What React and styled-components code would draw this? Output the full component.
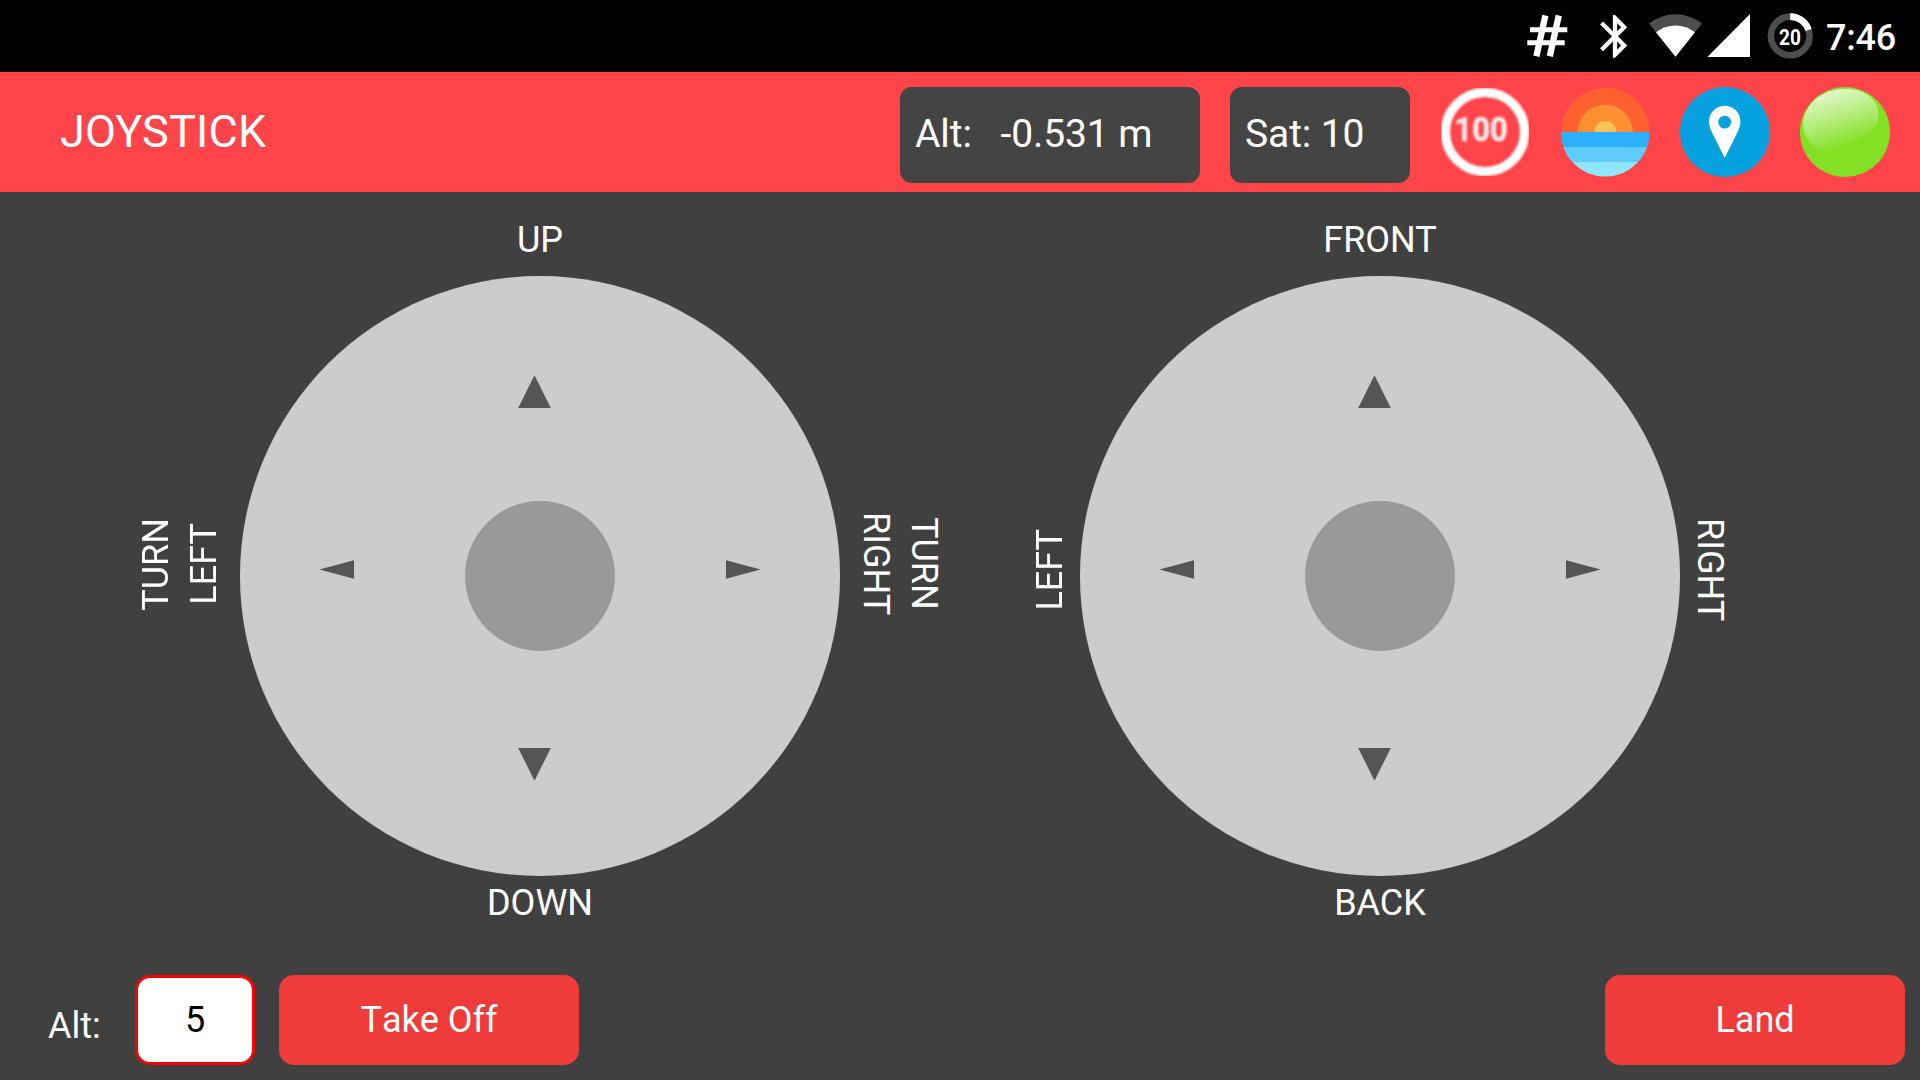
import React from "react";
import styled, { createGlobalStyle } from "styled-components";

const GlobalStyle = createGlobalStyle`
  * { box-sizing: border-box; }
  body {
    margin: 0;
    background: #404040;
    color: #fff;
    font-family: Roboto, "Noto Sans", sans-serif;
    font-size: 36px;
  }
`;

const Screen = styled.div`
  display: flex;
  flex-direction: column;
  width: 1920px;
  height: 1080px;
  overflow: hidden;
  background: #404040;
`;

const StatusBar = styled.div`
  display: flex;
  align-items: center;
  justify-content: flex-end;
  height: 72px;
  padding-right: 23px;
  background: #000;
`;

const StatusIcon = styled.svg`
  flex: none;
  display: block;
  width: ${(p) => p.$w}px;
  height: 72px;
  margin-right: ${(p) => p.$gap || 0}px;
`;

const Clock = styled.span`
  width: 71px;
  font-size: 36px;
  font-weight: 500;
  line-height: 72px;
  letter-spacing: -0.2px;
  padding-top: 4px;
`;

const Header = styled.header`
  display: flex;
  align-items: flex-start;
  gap: 30px;
  height: 120px;
  padding: 15px 30px 15px 60px;
  background: #ff444a;
`;

const Title = styled.h1`
  flex: 1;
  margin: 0;
  font-size: 45px;
  font-weight: 400;
  line-height: 90px;
  letter-spacing: 0.2px;
`;

const Readout = styled.div`
  width: ${(p) => p.$width}px;
  height: 96px;
  padding: 0 15px;
  border-radius: 12px;
  background: #444;
  font-size: 39px;
  line-height: 95px;
  letter-spacing: -0.1px;
  white-space: pre;
`;

const Badge = styled.svg`
  flex: none;
  display: block;
  width: 90px;
  height: 90px;
`;

const Controls = styled.main`
  display: grid;
  grid-template-columns: 240px 600px 240px 600px 240px;
  grid-template-rows: 84px 600px 51px;
  height: 735px;
`;

const TopLabel = styled.div`
  grid-column: ${(p) => p.$column};
  grid-row: 1;
  align-self: end;
  height: 60px;
  line-height: 48px;
  text-align: center;
`;

const BottomLabel = styled.div`
  grid-column: ${(p) => p.$column};
  grid-row: 3;
  padding-top: 3px;
  line-height: 48px;
  text-align: center;
`;

const Gutter = styled.div`
  grid-column: ${(p) => p.$column};
  grid-row: 2;
  display: flex;
  align-items: center;
  justify-content: ${(p) => p.$justify};
  padding: ${(p) => p.$pad};
`;

const SideLabel = styled.div`
  writing-mode: vertical-rl;
  line-height: 48px;
  text-align: center;
  white-space: pre;
  transform: ${(p) => (p.$flip ? "rotate(180deg)" : "none")};
  margin-bottom: ${(p) => p.$lift}px;
`;

const Pad = styled.div`
  grid-column: ${(p) => p.$column};
  grid-row: 2;
  display: flex;
  flex-direction: column;
  align-items: center;
  width: 600px;
  height: 600px;
  padding-top: 99px;
  border-radius: 50%;
  background: #ccc;
`;

const PadRow = styled.div`
  display: flex;
  align-items: center;
  gap: ${(p) => p.$gap || 0}px;
  padding-right: ${(p) => p.$shift || 0}px;
  margin: ${(p) => p.$margin || 0};
`;

const Knob = styled.div`
  width: 150px;
  height: 150px;
  border-radius: 50%;
  background: #999;
`;

const Arrow = styled.svg`
  display: block;
  fill: #555;
  margin-bottom: ${(p) => p.$lift || 0}px;
`;

const BottomBar = styled.footer`
  display: flex;
  align-items: flex-start;
  height: 153px;
  padding: 48px 15px 0 48px;
`;

const FieldLabel = styled.label`
  width: 87px;
  line-height: 90px;
  padding-top: 6px;
`;

const Field = styled.input`
  width: 120px;
  height: 90px;
  padding: 0;
  margin: 0 24px 0 0;
  border: 3px solid #f00;
  border-radius: 15px;
  outline: 0;
  background: #fff;
  color: #000;
  font: 400 36px Roboto, sans-serif;
  text-align: center;
`;

const Button = styled.button`
  width: 300px;
  height: 90px;
  padding: 0;
  margin-left: ${(p) => (p.$end ? "auto" : 0)};
  border: 0;
  border-radius: 15px;
  background: #ef3b39;
  color: #fff;
  font: 400 36px Roboto, sans-serif;
  font-kerning: none;
`;

function StatusIcons() {
  return (
    <>
      <StatusIcon $w={42} $gap={20} viewBox="1526 0 42 72">
        <g stroke="#fff" fill="none">
          <path strokeWidth="6.3" d="M1545.4 15.5L1536.4 56.2M1558.8 15.5L1549.8 56.2" />
          <path strokeWidth="5" d="M1530 29.8H1567.3M1527.3 42.7H1564.7" />
        </g>
      </StatusIcon>
      <StatusIcon $w={51} $gap={10} viewBox="1588 0 51 72">
        <path
          fill="#fff"
          transform="translate(1589.4 10.7) scale(2.135)"
          d="M17.71 7.71L12 2h-1v7.59L6.41 5 5 6.41 10.59 12 5 17.59 6.41 19 11 14.41V22h1l5.71-5.71-4.3-4.29 4.3-4.29zM13 5.83l1.88 1.88L13 9.59V5.83zm1.88 10.46L13 18.17v-3.76l1.88 1.88z"
        />
      </StatusIcon>
      <StatusIcon $w={54} $gap={4} viewBox="1649 0 54 72">
        <path fill="#4d4d4d" d="M1675.5 56.5L1649 23.6A42.3 42.3 0 0 1 1702 23.6Z" />
        <path fill="#fff" d="M1675.5 56.7L1656 32.3A31.2 31.2 0 0 1 1695 32.3Z" />
      </StatusIcon>
      <StatusIcon $w={43} $gap={17} viewBox="1707 0 43 72">
        <path fill="#fff" d="M1707.3 57H1750V14Z" />
      </StatusIcon>
      <StatusIcon $w={46} $gap={13} viewBox="1767 0 46 72">
        <g fill="none" strokeWidth="6.6">
          <circle cx="1790.2" cy="35.9" r="19.3" stroke="#4d4d4d" />
          <path stroke="#fff" d="M1790.2 16.6A19.3 19.3 0 0 1 1808.55 29.94" />
        </g>
        <text
          x="1779" y="45.2" fill="#fff" fontSize="22.5" fontWeight="700"
          textLength="21.8" lengthAdjust="spacingAndGlyphs"
        >20</text>
      </StatusIcon>
    </>
  );
}

function SpeedBadge() {
  return (
    <Badge viewBox="0 0 90 90">
      <g filter="url(#soften)">
        <circle cx="45" cy="45" r="39.6" fill="none" stroke="#fff" strokeWidth="9.4" />
        <text
          x="14.6" y="54" fill="#ffecec" stroke="#ffecec" strokeWidth="0.5" fontSize="33" fontWeight="700"
          textLength="53" lengthAdjust="spacingAndGlyphs"
        >100</text>
      </g>
      <filter id="soften" x="-5%" y="-5%" width="110%" height="110%">
        <feGaussianBlur stdDeviation="0.8" />
      </filter>
    </Badge>
  );
}

function SunBadge() {
  return (
    <Badge viewBox="0 0 90 90">
      <clipPath id="disc"><circle cx="45.2" cy="45.2" r="44.4" /></clipPath>
      <g clipPath="url(#disc)">
        <rect width="90" height="90" fill="#ff6030" />
        <circle cx="45.2" cy="45" r="27.6" fill="#ff8f33" />
        <circle cx="45.2" cy="45.3" r="11.2" fill="#ffc25a" />
        <rect y="45" width="90" height="15" fill="#2bb0ff" />
        <rect y="60" width="90" height="15" fill="#60cbff" />
        <rect y="75" width="90" height="15" fill="#8fe6ff" />
      </g>
    </Badge>
  );
}

function PinBadge() {
  return (
    <Badge viewBox="0 0 90 90">
      <circle cx="45" cy="45" r="45" fill="#05a1de" />
      <path
        fill="#fff" fillRule="evenodd"
        d="M44.7 18.7A15.7 15.7 0 0 0 29 34.4C29 38 30 41.5 32 45.5L44.7 71L57.4 45.5C59.4 41.5 60.4 38 60.4 34.4A15.7 15.7 0 0 0 44.7 18.7ZM44.7 28.7A6.4 6.4 0 1 1 44.7 41.5A6.4 6.4 0 1 1 44.7 28.7Z"
      />
    </Badge>
  );
}

function StatusLight() {
  return (
    <Badge viewBox="0 0 90 90">
      <linearGradient id="gloss" gradientUnits="userSpaceOnUse" x1="27" y1="2" x2="46" y2="60">
        <stop offset="0" stopColor="#fff" stopOpacity="0.8" />
        <stop offset="1" stopColor="#fff" stopOpacity="0" />
      </linearGradient>
      <circle cx="45" cy="45" r="45" fill="#84e024" />
      <path
        fill="url(#gloss)"
        d="M45 1.8C64 1.8 78.6 12 78.6 28C78.6 42 68 49 52 54C40 58 32 64 25 64C12 60 3.2 50 3.2 38C3.2 18 22 1.8 45 1.8Z"
      />
    </Badge>
  );
}

function Joystick({ column }) {
  return (
    <Pad $column={column}>
      <PadRow $shift={11}>
        <Arrow width="33" height="33" viewBox="0 0 33 33"><path d="M16.5 0.3L32.8 33H0.2Z" /></Arrow>
      </PadRow>
      <PadRow $gap={111} $shift={1} $margin="93px 0 97px">
        <Arrow $lift={13} width="35" height="19" viewBox="0 0 35 19"><path d="M0.4 9.5L35 0.3V18.7Z" /></Arrow>
        <Knob />
        <Arrow $lift={13} width="35" height="19" viewBox="0 0 35 19"><path d="M34.6 9.5L0 0.3V18.7Z" /></Arrow>
      </PadRow>
      <PadRow $shift={11}>
        <Arrow width="33" height="33" viewBox="0 0 33 33"><path d="M16.5 32.7L32.8 0H0.2Z" /></Arrow>
      </PadRow>
    </Pad>
  );
}

export default function App() {
  return (
    <Screen>
      <GlobalStyle />
      <StatusBar>
        <StatusIcons />
        <Clock>7:46</Clock>
      </StatusBar>
      <Header>
        <Title>JOYSTICK</Title>
        <Readout $width={300}>{"Alt:   -0.531 m"}</Readout>
        <Readout $width={180}>Sat: 10</Readout>
        <SpeedBadge />
        <SunBadge />
        <PinBadge />
        <StatusLight />
      </Header>
      <Controls>
        <TopLabel $column={2}>UP</TopLabel>
        <TopLabel $column={4}>FRONT</TopLabel>
        <Gutter $column={1} $justify="flex-end" $pad="0 12px 0 0">
          <SideLabel $flip $lift={24}>{"TURN\nLEFT"}</SideLabel>
        </Gutter>
        <Joystick column={2} />
        <Gutter $column={3} $justify="space-between" $pad="0 6px 0 12px">
          <SideLabel $lift={25}>{"TURN\nRIGHT"}</SideLabel>
          <SideLabel $flip $lift={12}>LEFT</SideLabel>
        </Gutter>
        <Joystick column={4} />
        <Gutter $column={5} $justify="flex-start" $pad="0 0 0 6px">
          <SideLabel $lift={12}>RIGHT</SideLabel>
        </Gutter>
        <BottomLabel $column={2}>DOWN</BottomLabel>
        <BottomLabel $column={4}>BACK</BottomLabel>
      </Controls>
      <BottomBar>
        <FieldLabel htmlFor="altitude">Alt:</FieldLabel>
        <Field id="altitude" defaultValue="5" />
        <Button>Take Off</Button>
        <Button $end>Land</Button>
      </BottomBar>
    </Screen>
  );
}
